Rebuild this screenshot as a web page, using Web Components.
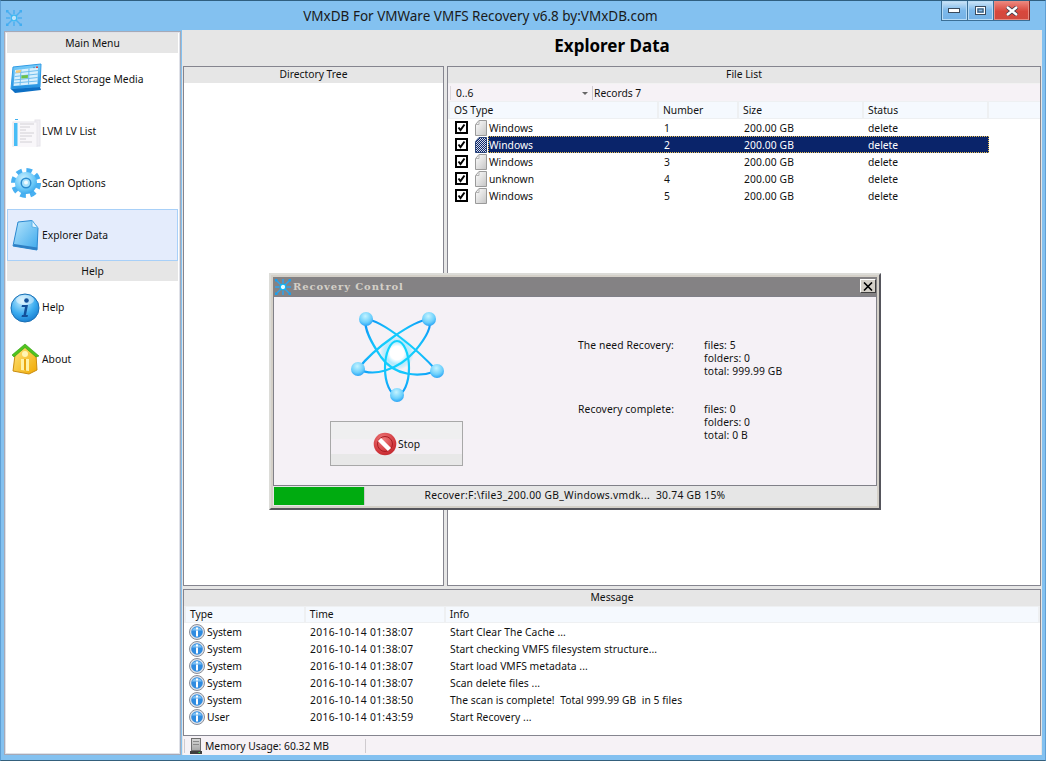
<!DOCTYPE html>
<html><head><meta charset="utf-8">
<style>
html,body{margin:0;padding:0;background:#83c1f0}
body{font:10.300px "Noto Sans","Liberation Sans",sans-serif;color:#000;overflow:hidden}
</style></head><body>
<vm-window>
  <vm-titlebar slot="title">VMxDB For VMWare VMFS Recovery v6.8 by:VMxDB.com</vm-titlebar>
  <vm-sidebar slot="side">
    <vm-menu-head>Main Menu</vm-menu-head>
    <vm-menu-item icon="table">Select Storage Media</vm-menu-item>
    <vm-menu-item icon="list">LVM LV List</vm-menu-item>
    <vm-menu-item icon="gear">Scan Options</vm-menu-item>
    <vm-menu-item icon="doc" active>Explorer Data</vm-menu-item>
    <vm-menu-head short>Help</vm-menu-head>
    <vm-menu-item icon="help">Help</vm-menu-item>
    <vm-menu-item icon="about">About</vm-menu-item>
  </vm-sidebar>
  <vm-content slot="main" heading="Explorer Data">
    <vm-panel slot="tree" heading="Directory Tree"></vm-panel>
    <vm-panel slot="files" heading="File List">
      <vm-toolbar range="0..6">Records 7</vm-toolbar>
      <vm-header h="18" cols="209 80 125 125" cells="OS Type|Number|Size|Status"></vm-header>
      <vm-file-row name="Windows" num="1" size="200.00 GB" status="delete"></vm-file-row>
      <vm-file-row name="Windows" num="2" size="200.00 GB" status="delete" selected></vm-file-row>
      <vm-file-row name="Windows" num="3" size="200.00 GB" status="delete"></vm-file-row>
      <vm-file-row name="unknown" num="4" size="200.00 GB" status="delete"></vm-file-row>
      <vm-file-row name="Windows" num="5" size="200.00 GB" status="delete"></vm-file-row>
    </vm-panel>
    <vm-panel slot="log" heading="Message">
      <vm-header h="17" lift cols="120 140 595" cells="Type|Time|Info"></vm-header>
      <vm-log-row type="System" time="2016-10-14 01:38:07">Start Clear The Cache ...</vm-log-row>
      <vm-log-row type="System" time="2016-10-14 01:38:07">Start checking VMFS filesystem structure...</vm-log-row>
      <vm-log-row type="System" time="2016-10-14 01:38:07">Start load VMFS metadata ...</vm-log-row>
      <vm-log-row type="System" time="2016-10-14 01:38:07">Scan delete files ...</vm-log-row>
      <vm-log-row type="System" time="2016-10-14 01:38:50">The scan is complete!&nbsp; Total 999.99 GB&nbsp; in 5 files</vm-log-row>
      <vm-log-row type="User" time="2016-10-14 01:43:59">Start Recovery ...</vm-log-row>
    </vm-panel>
    <vm-statusbar slot="status">Memory Usage: 60.32 MB</vm-statusbar>
  </vm-content>
  <vm-dialog slot="overlay" heading="Recovery Control" progress="Recover:F:\file3_200.00 GB_Windows.vmdk...&nbsp; 30.74 GB 15%">
    <vm-stat label="The need Recovery:" files="5" folders="0" total="999.99 GB" slot="stats"></vm-stat>
    <vm-stat label="Recovery complete:" files="0" folders="0" total="0 B" slot="stats"></vm-stat>
  </vm-dialog>
</vm-window>
<script>
const ICONS={
table:`<svg viewBox="0 0 32 32" width="32" height="32"><defs><linearGradient id="t" x1="0" y1="0" x2="0" y2="1"><stop offset="0" stop-color="#7fd0fa"/><stop offset="1" stop-color="#1f8fe0"/></linearGradient></defs><path d="M3 4 L31 1 L30 24 L1 26Z" fill="url(#t)" stroke="#2f9be6"/><path d="M1 26 L30 24 L31 27 L5 30Z" fill="#0d6fc4"/><path d="M5 7 L28 4.500 L27.500 21 L3.500 23Z" fill="#d8f0fd"/><path d="M5 10 L28 7.500 M4.700 13.500 L27.800 11 M4.300 17 L27.700 14.500 M4 20 L27.500 18 M11 6.500 L10 22.500 M19 5.500 L18.500 21.500" stroke="#6fbdee" stroke-width="1" fill="none"/><path d="M6 7.500 L11 7 L10.800 9.500 L5.800 10Z" fill="#f3c878"/><path d="M11.500 12.500 L18 12 L17.800 15 L11.200 15.500Z" fill="#6cc24a"/><rect x="26" y="3.500" width="2" height="1.500" fill="#e04040"/><rect x="23" y="3.800" width="2" height="1.300" fill="#60a0d0"/></svg>`,
list:`<svg viewBox="0 0 32 32" width="32" height="32"><rect x="25" y="5" width="5" height="26" fill="#f0eef3" stroke="#e6e4ea"/><rect x="3" y="7" width="24" height="26" fill="#f9f7fa" stroke="#e8e6ec"/><rect x="4" y="8" width="3.500" height="23" fill="#48bdf6"/><rect x="5" y="4" width="3" height="1" fill="#3db0f0"/><path d="M10 9 H24 M10 12 H20 M10 15 H16 M10 18 H24 M10 21 H22 M10 24 H16 M10 27 H22" stroke="#d2d0d5" stroke-width="1"/></svg>`,
gear:`<svg viewBox="0 0 32 32" width="32" height="32"><defs><radialGradient id="g" cx=".4" cy=".3" r=".8"><stop offset="0" stop-color="#c8efff"/><stop offset=".6" stop-color="#6ac8f8"/><stop offset="1" stop-color="#2a9ce8"/></radialGradient></defs><circle cx="16" cy="16" r="12.300" fill="none" stroke="#48b0f2" stroke-width="5.500" stroke-dasharray="5.400 4.260"/><circle cx="16" cy="16" r="11" fill="url(#g)"/><circle cx="16" cy="16" r="5.500" fill="#2b8ccf"/><circle cx="16" cy="16" r="4" fill="#a8e2fc"/><circle cx="16" cy="15.500" r="2" fill="#f2fbff"/></svg>`,
doc:`<svg viewBox="0 0 32 32" width="32" height="32"><defs><linearGradient id="d" x1="0" y1="0" x2="1" y2="1"><stop offset="0" stop-color="#b8e6fc"/><stop offset="1" stop-color="#3ca8ec"/></linearGradient></defs><path d="M8 3 L22 1.500 L28 9 L27 31 L3 27Z" fill="url(#d)" stroke="#2a88d0"/><path d="M22 1.500 L22 8 L28 9Z" fill="#e8f6fe" stroke="#5ab0e8"/><path d="M3 27 L27 31 L27.300 28.500 L4 25Z" fill="#2e7fc4"/></svg>`,
help:`<svg viewBox="0 0 32 32" width="32" height="32"><defs><radialGradient id="h" cx=".4" cy=".25" r=".85"><stop offset="0" stop-color="#c8efff"/><stop offset=".55" stop-color="#3dadf0"/><stop offset="1" stop-color="#0e72c8"/></radialGradient></defs><circle cx="15" cy="17" r="14" fill="url(#h)" stroke="#1b6fb4"/><ellipse cx="15" cy="9" rx="9" ry="5" fill="#fff" opacity=".45"/><circle cx="16.500" cy="9.500" r="2.300" fill="#12509a"/><path d="M12 14 H18 L16 24 H18 L17.500 26 H11.500 L12 24 H13.500 L15 16 H11.500Z" fill="#12509a"/></svg>`,
about:`<svg viewBox="0 0 32 32" width="32" height="32"><defs><linearGradient id="a" x1="0" y1="0" x2="1" y2="1"><stop offset="0" stop-color="#ffe780"/><stop offset="1" stop-color="#f0a800"/></linearGradient></defs><path d="M5 12 L15 3 L26 12 L27 27 L19 31 L3 28Z" fill="url(#a)" stroke="#c98c10"/><path d="M2 12 L15 1 L29 13 L26 14 L15 4.500 L4 14Z" fill="#4fc41e" stroke="#2f9a10" stroke-width=".6"/><circle cx="15" cy="11" r="3" fill="#fff5b4"/><path d="M11 16 H19 L19 28 L11 27Z" fill="#fff2a6"/><path d="M14 16 L16 16 L16 28 L14 27Z" fill="#e8a610"/></svg>`,
info:`<svg viewBox="0 0 16 16" width="16" height="16"><circle cx="8" cy="8" r="7.500" fill="#dfe3ea" stroke="#8a8e98"/><circle cx="8" cy="8" r="5.800" fill="#2f8be0"/><path d="M3 6.500 A5.500 5.500 0 0 1 13 6.500Z" fill="#7cc0f4"/><rect x="7" y="3.500" width="2" height="2" fill="#fff"/><rect x="7" y="6.500" width="2" height="6" fill="#fff"/></svg>`,
server:`<svg viewBox="0 0 12 16" width="12" height="16"><defs><linearGradient id="sv" x1="0" y1="0" x2="0" y2="1"><stop offset="0" stop-color="#d8d8d8"/><stop offset="1" stop-color="#a8a8a8"/></linearGradient></defs><rect x="1.500" y=".5" width="9" height="12" fill="url(#sv)" stroke="#6e6e6e"/><path d="M3 3.500 H9 M3 6.500 H9" stroke="#8a8a8a"/><rect x="0" y="13" width="12" height="3" fill="#3e3e3e"/><rect x="8.500" y="14" width="1.500" height="1" fill="#34d040"/></svg>`,
stop:`<svg viewBox="0 0 24 24" width="24" height="24"><defs><radialGradient id="s" cx=".4" cy=".3" r=".85"><stop offset="0" stop-color="#ee7c7c"/><stop offset=".7" stop-color="#cf3238"/><stop offset="1" stop-color="#b5252a"/></radialGradient></defs><circle cx="12" cy="12" r="11.300" fill="url(#s)"/><circle cx="12" cy="12" r="7.500" fill="none" stroke="#a81c22" stroke-width="1"/><path d="M6.500 7.500 L16.500 17.500" stroke="#fff" stroke-width="4.500"/></svg>`,
file:`<svg viewBox="0 0 13 16" width="13" height="16"><defs><linearGradient id="f" x1="0" y1="0" x2="1" y2="1"><stop offset="0" stop-color="#fff"/><stop offset="1" stop-color="#c4c4c4"/></linearGradient></defs><path d="M1.500 15.500 V4.500 L5 .5 H12.500 V15.500Z" fill="url(#f)" stroke="#9a9a9a"/><path d="M1.500 4.500 H5 V.5" fill="none" stroke="#b4b4b4"/></svg>`,
filesel:`<svg viewBox="0 0 13 16" width="13" height="16"><defs><pattern id="fs" width="2" height="2" patternUnits="userSpaceOnUse"><rect width="2" height="2" fill="#d8dde8"/><rect width="1" height="1" fill="#0a246a"/><rect x="1" y="1" width="1" height="1" fill="#0a246a"/></pattern></defs><path d="M1.500 15.500 V4.500 L5 .5 H12.500 V15.500Z" fill="url(#fs)" stroke="#2a447a"/></svg>`,
logo:`<svg viewBox="0 0 18 18" width="18" height="18" style="flex:none"><path d="M3 3 L7 7 M11 11 L15 15 M15 3 L11 7 M7 11 L3 15 M9 1 V5 M9 13 V17 M1 9 H5 M13 9 H17" stroke="#2aa4f0" stroke-width="1.500"/><circle cx="9" cy="9" r="2.800" fill="#e8fbff" stroke="#10b4f4" stroke-width="1.300"/><g fill="#18a0f0"><rect x="1" y="1" width="2.500" height="2.500"/><rect x="14.500" y="1" width="2.500" height="2.500"/><rect x="1" y="14.500" width="2.500" height="2.500"/><rect x="14.500" y="14.500" width="2.500" height="2.500"/></g></svg>`,
atom:`<svg viewBox="0 0 105 105" width="105" height="105"><defs><radialGradient id="o" gradientUnits="userSpaceOnUse" cx="52" cy="48" r="50"><stop offset="0" stop-color="#10e0ff"/><stop offset=".5" stop-color="#14c0fc"/><stop offset="1" stop-color="#0a84f4"/></radialGradient><radialGradient id="b" cx=".45" cy=".3" r=".75"><stop offset="0" stop-color="#c4f3ff"/><stop offset=".6" stop-color="#6cd0fc"/><stop offset="1" stop-color="#1d9cf4"/></radialGradient><radialGradient id="c"><stop offset=".4" stop-color="#fff"/><stop offset=".65" stop-color="#a8eaff" stop-opacity=".9"/><stop offset="1" stop-color="#80e0ff" stop-opacity="0"/></radialGradient></defs><circle cx="52" cy="48" r="17" fill="url(#c)"/><g fill="none" stroke="url(#o)" stroke-width="2.200"><path d="M21 14 C38 16 72 44 92 66 C75 72 50 72 36 52 C28 40 18 24 21 14Z"/><path d="M84 14 C68 16 30 42 13 64 C28 72 52 66 70 46 C80 34 88 22 84 14Z"/><ellipse cx="52" cy="63" rx="12" ry="27"/></g><circle cx="52" cy="48" r="6.500" fill="#fff"/><g fill="url(#b)"><circle cx="21" cy="14" r="7"/><circle cx="84" cy="14" r="7"/><circle cx="13" cy="64" r="7"/><circle cx="92" cy="66" r="7"/><circle cx="52" cy="90" r="7"/></g></svg>`
};
function def(name,css,html){
  class E extends HTMLElement{
    constructor(){super();this.attachShadow({mode:'open'});}
    connectedCallback(){
      const a=n=>this.getAttribute(n)||'';
      this.shadowRoot.innerHTML=`<style>${css}</style>`+html(a,this);
    }
  }
  customElements.define(name,E);
}
def('vm-window',`:host{display:block;position:relative;width:1046px;height:761px;box-sizing:border-box;background:#83c1f0;border-top:1px solid #2f5f80;border-bottom:1px solid #34607c;border-left:1px solid #5f9fd4;border-right:1px solid #5f9fd4}
.col{display:flex;flex-direction:column;height:100%}
.body{flex:1;display:flex;gap:1px;padding:0 3px 5px 3px;min-height:0}`,
()=>`<div class="col"><slot name="title"></slot><div class="body"><slot name="side"></slot><slot name="main"></slot></div></div><slot name="overlay"></slot>`);
def('vm-titlebar',`:host{display:block;height:29px;flex:none;position:relative}
.t{display:flex;height:27px;align-items:center;justify-content:center;font:13.500px "Noto Sans","Liberation Sans",sans-serif;color:#1a1a1a;padding-right:85px;padding-top:2px;box-sizing:border-box}
.logo{position:absolute;left:4px;top:8px;opacity:.6}
.btns{position:absolute;right:15px;top:0;display:flex;height:20px;border-left:1px solid #3b6f96;border-bottom:1px solid #3b6f96;box-sizing:border-box}
.b{width:26px;box-sizing:border-box;display:flex;align-items:center;justify-content:center;background:linear-gradient(#cfe6f8,#7db9ea 50%,#74b2e6);border-right:1px solid #3b6f96;box-shadow:inset 0 0 0 1px #b8dcf6}
.x{width:36px;border-right:1px solid #8a2a24;background:linear-gradient(#ee8a80,#d8473c 55%,#d0493e);box-shadow:inset 0 0 0 1px #e88a80}
svg{display:block}`,
()=>`<div class="logo">${ICONS.logo}</div><div class="t"><slot></slot></div><div class="btns"><div class="b"><svg width="13" height="6" viewBox="0 0 13 6"><rect x=".5" y=".5" width="11" height="4" fill="#fff" stroke="#3a4a5c"/></svg></div><div class="b"><svg width="12" height="10" viewBox="0 0 12 10"><rect x=".5" y=".5" width="10" height="8" fill="none" stroke="#3a4a5c"/><rect x="1.500" y="1.500" width="8" height="6" fill="none" stroke="#fff"/><rect x="3" y="3" width="5" height="3" fill="none" stroke="#3a4a5c"/></svg></div><div class="b x"><svg width="14" height="10" viewBox="0 0 14 10"><path d="M2 1 L12 9 M12 1 L2 9" stroke="#3a3a4a" stroke-width="4"/><path d="M2 1 L12 9 M12 1 L2 9" stroke="#fff" stroke-width="2.400"/></svg></div></div>`);
def('vm-sidebar',`:host{display:block;width:177px;flex:none;box-sizing:border-box;margin-top:1px;background:#fff;border:1px solid #a6a9b6;box-shadow:inset 0 0 0 1px #dfe1e8;padding:1px 2px 2px}`,()=>`<slot></slot>`);
def('vm-menu-head',`:host{display:flex;align-items:center;justify-content:center;height:20px;box-sizing:border-box;padding-bottom:1px;background:#e6e6e6;color:#111}`,()=>`<slot></slot>`);
def('vm-menu-item',`:host{display:flex;align-items:center;height:52px;box-sizing:border-box;padding-left:3px;color:#111}
:host([active]){background:#e4ecfc;border:1px solid #a8d0f8;padding-left:2px}
.i{width:32px;height:32px;flex:none;display:block}
svg{display:block}`,(a)=>`<span class="i">${ICONS[a('icon')]}</span><span class="l"><slot></slot></span>`);
def('vm-content',`:host{display:flex;flex-direction:column;flex:1;min-width:0;background:#e6e6e6}
h1{margin:0;height:36px;flex:none;display:flex;align-items:center;justify-content:center;font:bold 17px "Noto Sans","Liberation Sans",sans-serif;padding-bottom:6px;box-sizing:border-box}
.top{flex:1;display:flex;gap:3px;padding:0 1px;min-height:0}
.log{padding:3px 1px 0}
::slotted([slot=tree]){width:261px;flex:none}
::slotted([slot=files]){flex:1}`,
a=>`<h1>${a('heading')}</h1><div class="top"><slot name="tree"></slot><slot name="files"></slot></div><div class="log"><slot name="log"></slot></div><slot name="status"></slot>`);
def('vm-panel',`:host{display:flex;flex-direction:column;box-sizing:border-box;border:1px solid #85858f;background:#fff;min-height:0}
:host([slot=log]){height:147px}
.h{height:16px;flex:none;display:flex;align-items:center;justify-content:center;background:#e6e6e6;color:#111;padding-bottom:2px;box-sizing:border-box}`,
a=>`<div class="h">${a('heading')}</div><slot></slot>`);
def('vm-toolbar',`:host{display:flex;align-items:center;height:18px;flex:none;background:#f6f2f6;border-top:1px solid #f2f2f2;box-sizing:border-box;color:#111}
.r{width:140px;padding-left:5px;box-sizing:border-box;position:relative;border-left:1px solid #dcd8dc;margin-left:2px;height:14px;line-height:14px}
.r::after{content:"";position:absolute;right:2px;top:6px;border:3px solid transparent;border-top:3px solid #666}
.s{border-left:1px solid #cfcbcf;height:14px;line-height:14px;margin-left:2px;padding-left:1px}`,
a=>`<span class="r">${a('range')}</span><span class="s"><slot></slot></span>`);
def('vm-header',`:host{display:flex;flex:none;padding:1px 0 1px 2px;box-sizing:border-box;background:#eef0f2;gap:2px}
.c{background:#f5f9fe;box-sizing:border-box;padding-left:4px;display:flex;align-items:center;color:#111}
:host([lift]) .c{padding-bottom:2px}
.f{flex:1;padding:0}`,
(a,h)=>{h.style.height=a('h')+'px';const w=a('cols').split(' ');const c=a('cells').split('|');return c.map((t,i)=>`<span class="c" style="width:${w[i]-2}px">${t}</span>`).join('')+`<span class="c f"></span>`});
def('vm-file-row',`:host{display:flex;align-items:center;height:17px;color:#111}
.cb{width:13px;height:13px;box-sizing:border-box;border:2px solid #000;margin-left:7px;background:#fff;flex:none;display:block}
.cb svg,.ic svg{display:block}
.ic{margin-left:6px;margin-right:1px;flex:none;width:13px}
.cells{display:flex;align-items:center;height:17px;width:501px;box-sizing:border-box;border:1px solid transparent}
:host([selected]) .cells{background:#0a246a;color:#fff;border:1px dotted #e8c050}
.n{width:171px;box-sizing:border-box}.u{width:80px;padding-left:4px;box-sizing:border-box}.z{width:124px;padding-left:4px;box-sizing:border-box;letter-spacing:.1px}.s{padding-left:4px}`,
(a,h)=>`<span class="cb"><svg viewBox="0 0 9 9" width="9" height="9"><path d="M1.500 4.500 L3.500 7 L7.500 1.500" fill="none" stroke="#000" stroke-width="2"/></svg></span><span class="ic">${h.hasAttribute('selected')?ICONS.filesel:ICONS.file}</span><div class="cells"><span class="n">${a('name')}</span><span class="u">${a('num')}</span><span class="z">${a('size')}</span><span class="s">${a('status')}</span></div>`);
def('vm-log-row',`:host{display:flex;align-items:center;height:17px;color:#111}
.i{margin-left:5px;width:16px;flex:none}svg{display:block}
.t{width:105px;padding-left:2px;box-sizing:border-box}.d{width:140px;letter-spacing:.32px}.m{letter-spacing:.06px}`,
a=>`<span class="i">${ICONS.info}</span><span class="t">${a('type')}</span><span class="d">${a('time')}</span><span class="m"><slot></slot></span>`);
def('vm-statusbar',`:host{display:flex;align-items:center;height:19px;flex:none;background:#f6f2f6;box-sizing:border-box;margin:0 1px;color:#111}
.a{display:flex;align-items:center;gap:3px;width:182px;height:14px;border-left:1px solid #cfcbcf;border-right:1px solid #cfcbcf;padding-left:5px;box-sizing:border-box;margin-left:1px}svg{display:block}`,
()=>`<div class="a">${ICONS.server}<slot></slot></div>`);
def('vm-stat',`:host{display:grid;grid-template-columns:126px auto;color:#111;line-height:13px;letter-spacing:.1px}`,
a=>`<span>${a('label')}</span><span>files: ${a('files')}<br>folders: ${a('folders')}<br>total: ${a('total')}</span>`);
def('vm-dialog',`:host{position:absolute;left:268px;top:272px;width:612px;height:237px;box-sizing:border-box;display:flex;flex-direction:column;background:#d4d0c8;border:2px solid #dcdcd8;border-right-color:#55555c;border-bottom-color:#55555c;padding:2px;color:#111}
.tb{height:19px;flex:none;background:#848284;display:flex;align-items:center;padding-left:1px;color:#d4d0c8;font:bold 10px/1 "DejaVu Serif",serif;gap:1px;letter-spacing:.9px;position:relative}
.cl{position:absolute;right:1px;top:2px;width:16px;height:14px;box-sizing:border-box;background:#d4d0c8;border:1px solid;border-color:#fff #404040 #404040 #fff;display:flex;align-items:center;justify-content:center}
.mid{flex:1;display:flex;background:#f5f1f6;border:1px solid #808088;min-height:0}
.l{width:245px;flex:none;display:flex;flex-direction:column;align-items:center;padding-top:8px;box-sizing:border-box}
.atom{height:105px;width:105px;margin-left:1px}
.btn{width:133px;height:45px;box-sizing:border-box;margin-top:11px;border:1px solid #a8a8a8;background:linear-gradient(#efeff0 0,#efeff0 40%,#f3eff4 40%,#f3eff4 75%,#e8e8e8 75%);display:flex;align-items:center;justify-content:center;gap:1px;padding-top:1px}
.r{display:flex;flex-direction:column;gap:25px;padding:42px 0 0 59px}
.bar{height:20px;flex:none;background:#e6e6e6;display:flex;align-items:center;position:relative}
.g{position:absolute;left:1px;top:1px;width:90px;height:18px;background:#00ab10;border-right:1px solid #ccc}
.p{flex:1;text-align:center;padding-bottom:2px;letter-spacing:.28px}
svg{display:block}`,
a=>`<div class="tb">${ICONS.logo}<span>${a('heading')}</span><span class="cl"><svg width="10" height="9" viewBox="0 0 10 9"><path d="M1 .5 L9 8.500 M9 .5 L1 8.500" stroke="#000" stroke-width="1.600"/></svg></span></div><div class="mid"><div class="l"><div class="atom">${ICONS.atom}</div><div class="btn">${ICONS.stop}<span>Stop</span></div></div><div class="r"><slot name="stats"></slot></div></div><div class="bar"><div class="g"></div><div class="p">${a('progress')}</div></div>`);
</script>
</body></html>
